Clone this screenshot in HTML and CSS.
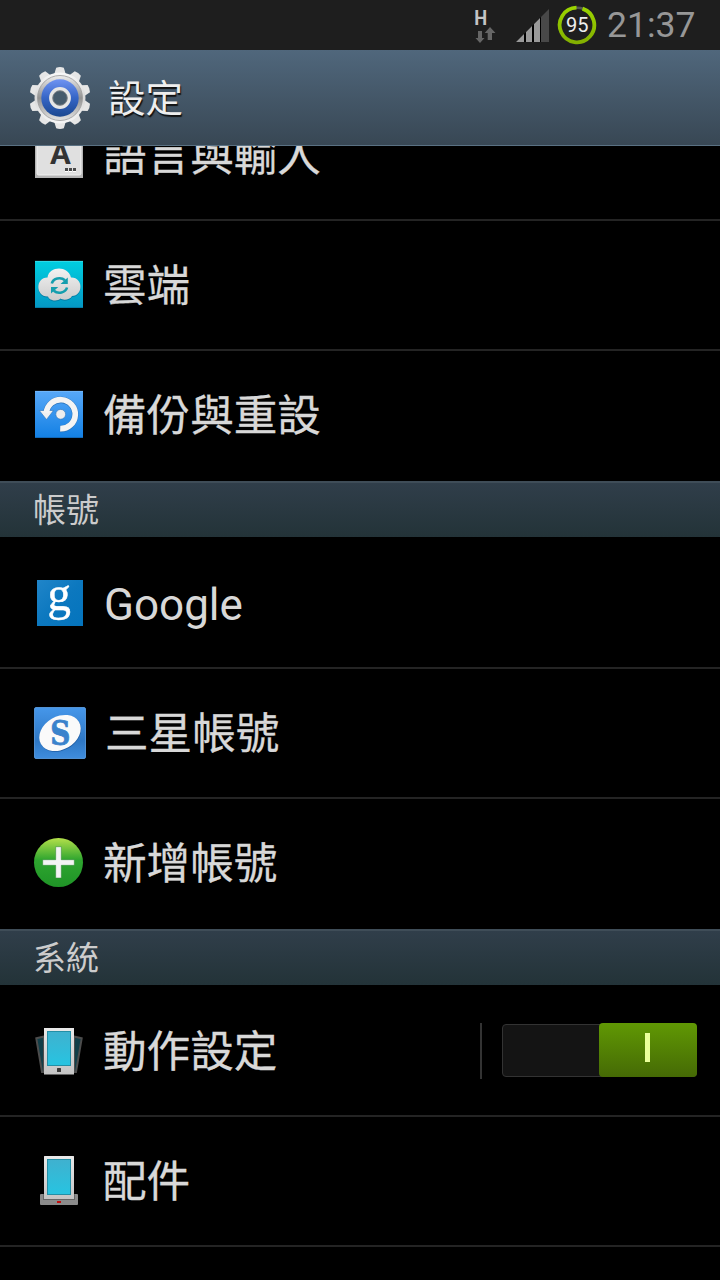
FILE: index.html
```html
<!DOCTYPE html>
<html lang="zh-Hant">
<head>
    <meta charset="utf-8">
    <title>設定</title>
    <link rel="stylesheet" href="styles.css">
</head>
<body>
    <div class="statusbar">
        <svg class="status-data" width="24" height="38" viewBox="0 0 24 38">
            <text class="data-type" transform="translate(1.200 19.500) scale(.87 1)">H</text>
            <path fill="#666" d="M5 26h4v7h2.500l-4.500 5l-4.500-5H5z"/>
            <path fill="#666" d="M14.700 35h4.300v-7h3.500l-5.500-6l-5.300 6h3z"/>
        </svg>
        <svg class="status-signal" width="33" height="33" viewBox="0 0 33 33">
            <path fill="#000" d="M0 33L25 8V33z"/>
            <path fill="#999" d="M0 33L8 25V33zM10 33V23L16 17V33zM18 33V15L24 9V33z"/>
            <path fill="#484848" d="M25 33V8L33 0V33z"/>
        </svg>
        <svg class="status-battery" width="40" height="40" viewBox="0 0 40 40">
            <circle cx="20" cy="20" r="17.300" fill="none" stroke="#555" stroke-width="2.500"/>
            <path d="M25.500 3.600A17.300 17.300 0 1 1 19.500 2.700" fill="none" stroke="url(#battery)" stroke-width="3.800"/>
            <text class="battery-level" x="20.300" y="27">95</text>
            <defs>
                <linearGradient id="battery" x1="0" y1="0" x2="0" y2="1">
                    <stop offset="0" stop-color="#9bd400"/>
                    <stop offset="1" stop-color="#83b000"/>
                </linearGradient>
            </defs>
        </svg>
        <div class="clock">21:37</div>
    </div>

    <div class="titlebar">
        <svg class="icon" viewBox="0 0 60 60">
            <defs>
                <linearGradient id="gearBody" x1="0" y1="0" x2="0" y2="1">
                    <stop offset="0" stop-color="#f8f8f8"/>
                    <stop offset=".5" stop-color="#d8d8d8"/>
                    <stop offset="1" stop-color="#f6f6f6"/>
                </linearGradient>
                <linearGradient id="gearRing" x1="0" y1="0" x2="0" y2="1">
                    <stop offset="0" stop-color="#eee"/>
                    <stop offset=".5" stop-color="#929292"/>
                    <stop offset="1" stop-color="#e4e4e4"/>
                </linearGradient>
                <linearGradient id="gearBlue" x1="0" y1="0" x2="0" y2="1">
                    <stop offset="0" stop-color="#6f93f2"/>
                    <stop offset=".5" stop-color="#3565c6"/>
                    <stop offset="1" stop-color="#1b4890"/>
                </linearGradient>
                <path id="tooth" d="M24 7L26.200 -.3Q30 -1.500 33.800 -.3L36 7z"/>
            </defs>
            <g fill="#e6e6e6">
                <use href="#tooth"/>
                <use href="#tooth" transform="rotate(36 30 30)"/>
                <use href="#tooth" transform="rotate(72 30 30)"/>
                <use href="#tooth" transform="rotate(108 30 30)"/>
                <use href="#tooth" transform="rotate(144 30 30)"/>
                <use href="#tooth" transform="rotate(180 30 30)"/>
                <use href="#tooth" transform="rotate(216 30 30)"/>
                <use href="#tooth" transform="rotate(252 30 30)"/>
                <use href="#tooth" transform="rotate(288 30 30)"/>
                <use href="#tooth" transform="rotate(324 30 30)"/>
            </g>
            <circle cx="30" cy="30" r="25.500" fill="url(#gearBody)"/>
            <circle cx="30" cy="30" r="22.500" fill="url(#gearRing)" stroke="#999" stroke-width=".8"/>
            <circle cx="30" cy="30" r="18.700" fill="url(#gearBlue)"/>
            <circle cx="30" cy="30" r="9.200" fill="#465b6c" stroke="#e6e6e6" stroke-width="3.400"/>
            <circle cx="30" cy="30" r="7.300" fill="none" stroke="#8b8b8b" stroke-width=".8"/>
        </svg>
        <h1>設定</h1>
    </div>

    <div class="list">
        <div class="item item-cut">
            <svg class="icon" viewBox="0 0 60 60">
                <rect x="5" y="5" width="48" height="48" fill="#b5b5b5"/>
                <rect x="7" y="7" width="44" height="43" rx="1.500" fill="#e0e0e0" stroke="#f0f0f0"/>
                <text class="icon-a" x="30.500" y="39">A</text>
                <path fill="#4a4a4a" d="M35 43h3v3h-3zM39 43h3v3h-3zM43 43h3v3h-3z"/>
                <path fill="#fff" d="M35 46h3v1h-3zM39 46h3v1h-3zM43 46h3v1h-3z"/>
            </svg>
            <span class="label">語言與輸入</span>
        </div>
        <div class="item">
            <svg class="icon" viewBox="0 0 60 60">
                <defs>
                    <linearGradient id="cloudBg" x1="0" y1="0" x2="0" y2="1">
                        <stop offset="0" stop-color="#00cfe0"/>
                        <stop offset="1" stop-color="#0497c4"/>
                    </linearGradient>
                    <linearGradient id="cloud" x1="0" y1="0" x2="0" y2="1">
                        <stop offset="0" stop-color="#f2f2f2"/>
                        <stop offset="1" stop-color="#ccc"/>
                    </linearGradient>
                </defs>
                <rect x="5" y="6" width="48" height="47" fill="url(#cloudBg)"/>
                <path fill="none" stroke="#5fe3ec" stroke-width=".6" d="M5 6.300h48"/>
                <path fill="none" stroke="#047ba5" d="M5 52.500h48"/>
                <path fill="#067fa6" transform="translate(0 1)" d="M17.500 22.500C19 11 38 10 41 22.500C53.500 22 53.500 41 42 41C40 45 33 45.500 30.500 43.500C27 47 19 45.500 18 41.500C5.500 42 5 22.500 17.500 22.500z"/>
                <path fill="url(#cloud)" d="M17.500 22.500C19 11 38 10 41 22.500C53.500 22 53.500 41 42 41C40 45 33 45.500 30.500 43.500C27 47 19 45.500 18 41.500C5.500 42 5 22.500 17.500 22.500z"/>
                <path fill="none" stroke="#149eae" stroke-width="2.600" d="M21.800 28.500A7.800 6.800 0 0 1 35 25.300M37 32.500A7.800 6.800 0 0 1 23.800 35.700"/>
                <path fill="#149eae" d="M37.800 22.500v6.500h-7.300zM21 38.500v-6.500h7.300z"/>
            </svg>
            <span class="label">雲端</span>
        </div>
        <div class="item item-last">
            <svg class="icon" viewBox="0 0 60 60">
                <defs>
                    <linearGradient id="backupBg" x1="0" y1="0" x2="0" y2="1">
                        <stop offset="0" stop-color="#58a8f8"/>
                        <stop offset="1" stop-color="#1280e4"/>
                    </linearGradient>
                </defs>
                <rect x="5" y="6" width="48" height="47" fill="url(#backupBg)"/>
                <path fill="none" stroke="#8ac4fb" stroke-width=".6" d="M5 6.300h48"/>
                <path fill="none" stroke="#1268b8" d="M5 52.500h48"/>
                <path fill="none" stroke="#2b74bb" stroke-width="6.600" d="M16.300 28A14.500 14.500 0 1 1 30 43.900"/>
                <path fill="#f0f0f0" stroke="#2b74bb" stroke-width=".6" d="M9.300 25.500H23.500L16.500 34.500z"/>
                <path fill="none" stroke="#f4f4f4" stroke-width="5.700" d="M16.300 28A14.500 14.500 0 1 1 30.200 43.700"/>
                <circle cx="30.700" cy="29.300" r="4.900" fill="#eee" stroke="#2b74bb" stroke-width=".6"/>
            </svg>
            <span class="label">備份與重設</span>
        </div>

        <h2>帳號</h2>
        <div class="item">
            <svg class="icon" viewBox="0 0 60 60">
                <defs>
                    <linearGradient id="googleBg" x1="0" y1="0" x2="1" y2="1">
                        <stop offset="0" stop-color="#2085c9"/>
                        <stop offset=".5" stop-color="#0c78bf"/>
                        <stop offset="1" stop-color="#0474bd"/>
                    </linearGradient>
                </defs>
                <rect x="7" y="7" width="46" height="46" fill="url(#googleBg)"/>
                <text class="icon-g" transform="translate(29.300 36.500) scale(.9 .95)">g</text>
            </svg>
            <span class="label label-latin">Google</span>
        </div>
        <div class="item">
            <svg class="icon" viewBox="0 0 60 60">
                <defs>
                    <linearGradient id="samsungBg" x1="0" y1="0" x2="0" y2="1">
                        <stop offset="0" stop-color="#4697ea"/>
                        <stop offset=".65" stop-color="#2e77c4"/>
                        <stop offset="1" stop-color="#3f8ddd"/>
                    </linearGradient>
                </defs>
                <rect x="4.500" y="4.500" width="51" height="51" rx="1.500" fill="url(#samsungBg)" stroke="#5ea5ec" stroke-width=".8"/>
                <ellipse cx="30.500" cy="31" rx="22" ry="16.500" fill="#1f5ea6" transform="rotate(-30 30 31)"/>
                <ellipse cx="30" cy="30" rx="22" ry="16.500" fill="#fafafa" transform="rotate(-30 30 30)"/>
                <text class="icon-s" transform="translate(30.200 42.300) scale(.82 1)">S</text>
            </svg>
            <span class="label label-samsung">三星帳號</span>
        </div>
        <div class="item item-last">
            <svg class="icon" viewBox="0 0 60 60">
                <defs>
                    <linearGradient id="addBg" x1="0" y1="0" x2="0" y2="1">
                        <stop offset="0" stop-color="#b4e04a"/>
                        <stop offset=".45" stop-color="#2ea52f"/>
                        <stop offset="1" stop-color="#1f9427"/>
                    </linearGradient>
                </defs>
                <circle cx="28.500" cy="29.500" r="24.500" fill="url(#addBg)"/>
                <path fill="#f4f4f4" stroke="#2a8430" stroke-width=".5" d="M25.700 13.700h5.600v13h13v5.600h-13v12.700h-5.600v-12.700h-13v-5.600h13z"/>
            </svg>
            <span class="label">新增帳號</span>
        </div>

        <h2>系統</h2>
        <div class="item">
            <svg class="icon" viewBox="0 0 60 60">
                <defs>
                    <linearGradient id="screen" x1="0" y1="0" x2="0" y2="1">
                        <stop offset="0" stop-color="#3fb1cf"/>
                        <stop offset="1" stop-color="#27c4e1"/>
                    </linearGradient>
                    <linearGradient id="phone" x1="0" y1="0" x2="0" y2="1">
                        <stop offset="0" stop-color="#e9e9e9"/>
                        <stop offset="1" stop-color="#c4c4c4"/>
                    </linearGradient>
                </defs>
                <path fill="#123e48" stroke="#4c4c4c" stroke-width="2" d="M6.300 17.300L14 15.500V51H12z"/>
                <path fill="#123e48" stroke="#4c4c4c" stroke-width="2" d="M51.700 17.300L44 15.500V51H46z"/>
                <rect x="14" y="7" width="30" height="46.500" fill="url(#phone)"/>
                <rect x="17.500" y="10.500" width="23" height="34" fill="url(#screen)" stroke="#238fa6"/>
                <rect x="27" y="47" width="4" height="4" rx=".5" fill="#3a3a3a"/>
            </svg>
            <span class="label">動作設定</span>
            <div class="switch-area">
                <div class="switch">
                    <div class="switch-thumb"><span class="switch-mark"></span></div>
                </div>
            </div>
        </div>
        <div class="item">
            <svg class="icon" viewBox="0 0 60 60">
                <rect x="10" y="43" width="38" height="11" rx="1" fill="#8b8b8b"/>
                <path fill="#666" d="M13 43h32v6H13z"/>
                <rect x="14" y="5" width="30" height="43" rx=".5" fill="url(#phone)"/>
                <rect x="17.500" y="8.500" width="23" height="35" fill="url(#screen)" stroke="#238fa6"/>
                <rect x="27" y="50" width="4" height="2" fill="#c40d0d"/>
            </svg>
            <span class="label">配件</span>
        </div>
    </div>
</body>
</html>
```
FILE: styles.css
```css
* {
    margin: 0;
    padding: 0;
    box-sizing: border-box;
}

body {
    height: 1280px;
    display: flex;
    flex-direction: column;
    background-color: #000;
    color: #d8d8d8;
    font-family: Roboto, "Noto Sans CJK TC", sans-serif;
    overflow: hidden;
}

/* Status bar */
.statusbar {
    height: 50px;
    flex-shrink: 0;
    display: flex;
    align-items: flex-start;
    justify-content: flex-end;
    padding-right: 26px;
    background: #1e1e1e;
}

.status-data {
    margin-top: 5px;
    margin-right: 19px;
}

.data-type {
    font-size: 21px;
    font-weight: bold;
    fill: #c4c4c4;
}

.status-signal {
    margin-top: 9px;
    margin-right: 8px;
}

.status-battery {
    margin-top: 5px;
    margin-right: 10px;
}

.battery-level {
    font-size: 20px;
    text-anchor: middle;
    fill: #eee;
}

.clock {
    width: 87px;
    font-size: 35.5px;
    line-height: 50px;
    text-align: right;
    color: #979797;
}

/* Title bar */
.titlebar {
    height: 96px;
    flex-shrink: 0;
    display: flex;
    align-items: center;
    padding-left: 30px;
    background: linear-gradient(#50677c, #384754);
    border-bottom: 1px solid #5a7183;
}

.icon {
    width: 60px;
    height: 60px;
    flex-shrink: 0;
    overflow: visible;
}

h1 {
    margin-left: 18px;
    padding-top: 2px;
    font-size: 37.5px;
    font-weight: normal;
    line-height: 50px;
    color: #eee;
    text-shadow: 1px 2px 1px #111;
}

/* Settings list */
.list {
    flex: 1;
    min-height: 0;
    overflow: hidden;
}

.item {
    height: 130px;
    display: flex;
    align-items: center;
    padding-left: 30px;
    border-bottom: 2px solid #242424;
}

.item-cut {
    margin-top: -55px;
}

.item-last {
    border-bottom-color: transparent;
}

.label {
    margin-left: 13px;
    padding-top: 4px;
    font-size: 43.6px;
    line-height: 60px;
    -webkit-text-stroke: 0.3px #d8d8d8;
}

.label-latin {
    margin-left: 14px;
    font-size: 44px;
    -webkit-text-stroke: 0;
}

.label-samsung {
    margin-left: 15px;
}

h2 {
    height: 56px;
    margin-bottom: 2px;
    padding-left: 33px;
    font-size: 33px;
    font-weight: normal;
    line-height: 56px;
    color: #ccc;
    background: linear-gradient(#303e4a, #233338);
    border-top: 2px solid #3f4d58;
}

/* Icon letters */
.icon-a {
    font-size: 31px;
    font-weight: bold;
    text-anchor: middle;
    fill: #333;
}

.icon-g {
    font-family: "Liberation Serif", serif;
    font-size: 52px;
    text-anchor: middle;
    fill: #fff;
    stroke: #fff;
    stroke-width: 0.5px;
}

.icon-s {
    font-family: "DejaVu Serif", serif;
    font-size: 34px;
    font-weight: bold;
    text-anchor: middle;
    fill: #3a83cc;
    stroke: #3a83cc;
    stroke-width: 0.8px;
}

/* Switch */
.switch-area {
    height: 56px;
    margin-left: auto;
    margin-right: 23px;
    padding-left: 20px;
    border-left: 2px solid #333;
}

.switch {
    width: 195px;
    height: 53px;
    margin-top: 1px;
    display: flex;
    justify-content: flex-end;
    background: #141414;
    border: 1px solid #333;
    border-radius: 4px;
}

.switch-thumb {
    width: 98px;
    height: 54px;
    margin: -2px -1px 0 0;
    padding: 10px 2px 0 0;
    display: flex;
    justify-content: center;
    background: linear-gradient(#609804, #456a05);
    border-radius: 4px;
}

.switch-mark {
    width: 5px;
    height: 29px;
    background: #eaff9b;
}
```
